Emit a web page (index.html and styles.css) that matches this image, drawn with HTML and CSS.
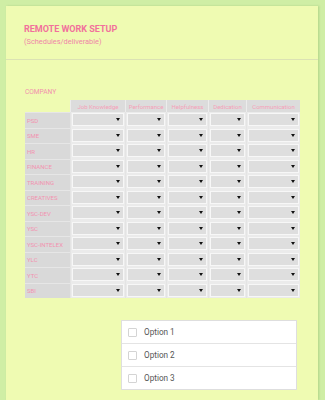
FILE: index.html
```html
<!DOCTYPE html>
<html>
<head>
<meta charset="utf-8">
<link rel="stylesheet" href="styles.css">
</head>
<body>
<div class="card">
  <div class="head">
    <div class="title">REMOTE WORK SETUP</div>
    <div class="sub">(Schedules/deliverable)</div>
  </div>
  <div class="body">
    <div class="label">COMPANY</div>
    <div class="grid">
      <div class="corner"></div>
      <div class="th">Job Knowledge</div>
      <div class="th">Performance</div>
      <div class="th">Helpfulness</div>
      <div class="th">Dedication</div>
      <div class="th">Communication</div>

      <div class="rl">PSD</div><div class="td"><span class="sel"></span></div><div class="td"><span class="sel"></span></div><div class="td"><span class="sel"></span></div><div class="td"><span class="sel"></span></div><div class="td"><span class="sel"></span></div>
      <div class="rl">SME</div><div class="td"><span class="sel"></span></div><div class="td"><span class="sel"></span></div><div class="td"><span class="sel"></span></div><div class="td"><span class="sel"></span></div><div class="td"><span class="sel"></span></div>
      <div class="rl">HR</div><div class="td"><span class="sel"></span></div><div class="td"><span class="sel"></span></div><div class="td"><span class="sel"></span></div><div class="td"><span class="sel"></span></div><div class="td"><span class="sel"></span></div>
      <div class="rl">FINANCE</div><div class="td"><span class="sel"></span></div><div class="td"><span class="sel"></span></div><div class="td"><span class="sel"></span></div><div class="td"><span class="sel"></span></div><div class="td"><span class="sel"></span></div>
      <div class="rl">TRAINING</div><div class="td"><span class="sel"></span></div><div class="td"><span class="sel"></span></div><div class="td"><span class="sel"></span></div><div class="td"><span class="sel"></span></div><div class="td"><span class="sel"></span></div>
      <div class="rl">CREATIVES</div><div class="td"><span class="sel"></span></div><div class="td"><span class="sel"></span></div><div class="td"><span class="sel"></span></div><div class="td"><span class="sel"></span></div><div class="td"><span class="sel"></span></div>
      <div class="rl">YSC-DEV</div><div class="td"><span class="sel"></span></div><div class="td"><span class="sel"></span></div><div class="td"><span class="sel"></span></div><div class="td"><span class="sel"></span></div><div class="td"><span class="sel"></span></div>
      <div class="rl">YSC</div><div class="td"><span class="sel"></span></div><div class="td"><span class="sel"></span></div><div class="td"><span class="sel"></span></div><div class="td"><span class="sel"></span></div><div class="td"><span class="sel"></span></div>
      <div class="rl">YSC-INTELEX</div><div class="td"><span class="sel"></span></div><div class="td"><span class="sel"></span></div><div class="td"><span class="sel"></span></div><div class="td"><span class="sel"></span></div><div class="td"><span class="sel"></span></div>
      <div class="rl">YLC</div><div class="td"><span class="sel"></span></div><div class="td"><span class="sel"></span></div><div class="td"><span class="sel"></span></div><div class="td"><span class="sel"></span></div><div class="td"><span class="sel"></span></div>
      <div class="rl">YTC</div><div class="td"><span class="sel"></span></div><div class="td"><span class="sel"></span></div><div class="td"><span class="sel"></span></div><div class="td"><span class="sel"></span></div><div class="td"><span class="sel"></span></div>
      <div class="rl">SBI</div><div class="td"><span class="sel"></span></div><div class="td"><span class="sel"></span></div><div class="td"><span class="sel"></span></div><div class="td"><span class="sel"></span></div><div class="td"><span class="sel"></span></div>
    </div>
    <div class="options">
      <div class="opt"><span class="box"></span><span>Option 1</span></div>
      <div class="opt"><span class="box"></span><span>Option 2</span></div>
      <div class="opt"><span class="box"></span><span>Option 3</span></div>
    </div>
  </div>
</div>
</body>
</html>
```

FILE: styles.css
```css
html, body {
  margin: 0;
  padding: 0;
  background: #cfeea5;
  font-family: Roboto, "Liberation Sans", sans-serif;
}
body {
  padding: 6px 7px 0 6px;
}
.card {
  background: #effbb2;
  height: 394px;
  box-shadow: 1px 0 2px rgba(120, 160, 80, 0.35);
}
.head {
  padding: 18px 18px 0 18px;
  height: 35px;
  border-bottom: 1px solid #dbe2b4;
}
.title {
  color: #f2709c;
  font-weight: 700;
  font-size: 9px;
  line-height: 11px;
}
.sub {
  color: #ef86a9;
  font-size: 7.4px;
  line-height: 9px;
  margin-top: 2px;
}
.body {
  padding: 28px 0 0 19px;
}
.label {
  color: #f290ae;
  font-size: 6.6px;
  line-height: 8px;
  height: 12px;
}
.grid {
  display: grid;
  grid-template-columns: 45px 55px 41px 42px 38px 54px;
  grid-template-rows: 12px repeat(12, 15.5px);
}
.corner {
  background: transparent;
}
.th {
  background: #dcdcdc;
  color: #f5a0b8;
  font-size: 6px;
  display: flex;
  align-items: center;
  justify-content: center;
  border-left: 1px solid #ececec;
  white-space: nowrap;
}
.rl {
  background: #d9d9d9;
  color: #f293b0;
  font-size: 6px;
  display: flex;
  align-items: center;
  padding-left: 2px;
  border-top: 1px solid #e6e6e6;
  white-space: nowrap;
}
.td {
  background: #ebebeb;
  display: flex;
  align-items: center;
  padding: 0 1px;
  border-left: 1px solid #e4e4e4;
}
.sel {
  flex: 1;
  height: 11px;
  background: #dedede;
  border: 1px solid #f7f7f7;
  position: relative;
}
.sel::after {
  content: "";
  position: absolute;
  right: 3px;
  top: 4px;
  border-left: 2px solid transparent;
  border-right: 2px solid transparent;
  border-top: 3px solid #111;
}
.options {
  margin: 22px 0 0 96px;
  width: 174px;
  background: #fff;
  border: 1px solid #dedede;
}
.opt {
  height: 22px;
  display: flex;
  align-items: center;
  font-size: 8.2px;
  color: #555;
  border-top: 1px solid #e4e4e4;
}
.opt:first-child {
  border-top: none;
}
.box {
  width: 7px;
  height: 7px;
  border: 1px solid #d4d4d4;
  border-radius: 1px;
  margin: 0 7px 0 6px;
}
```
